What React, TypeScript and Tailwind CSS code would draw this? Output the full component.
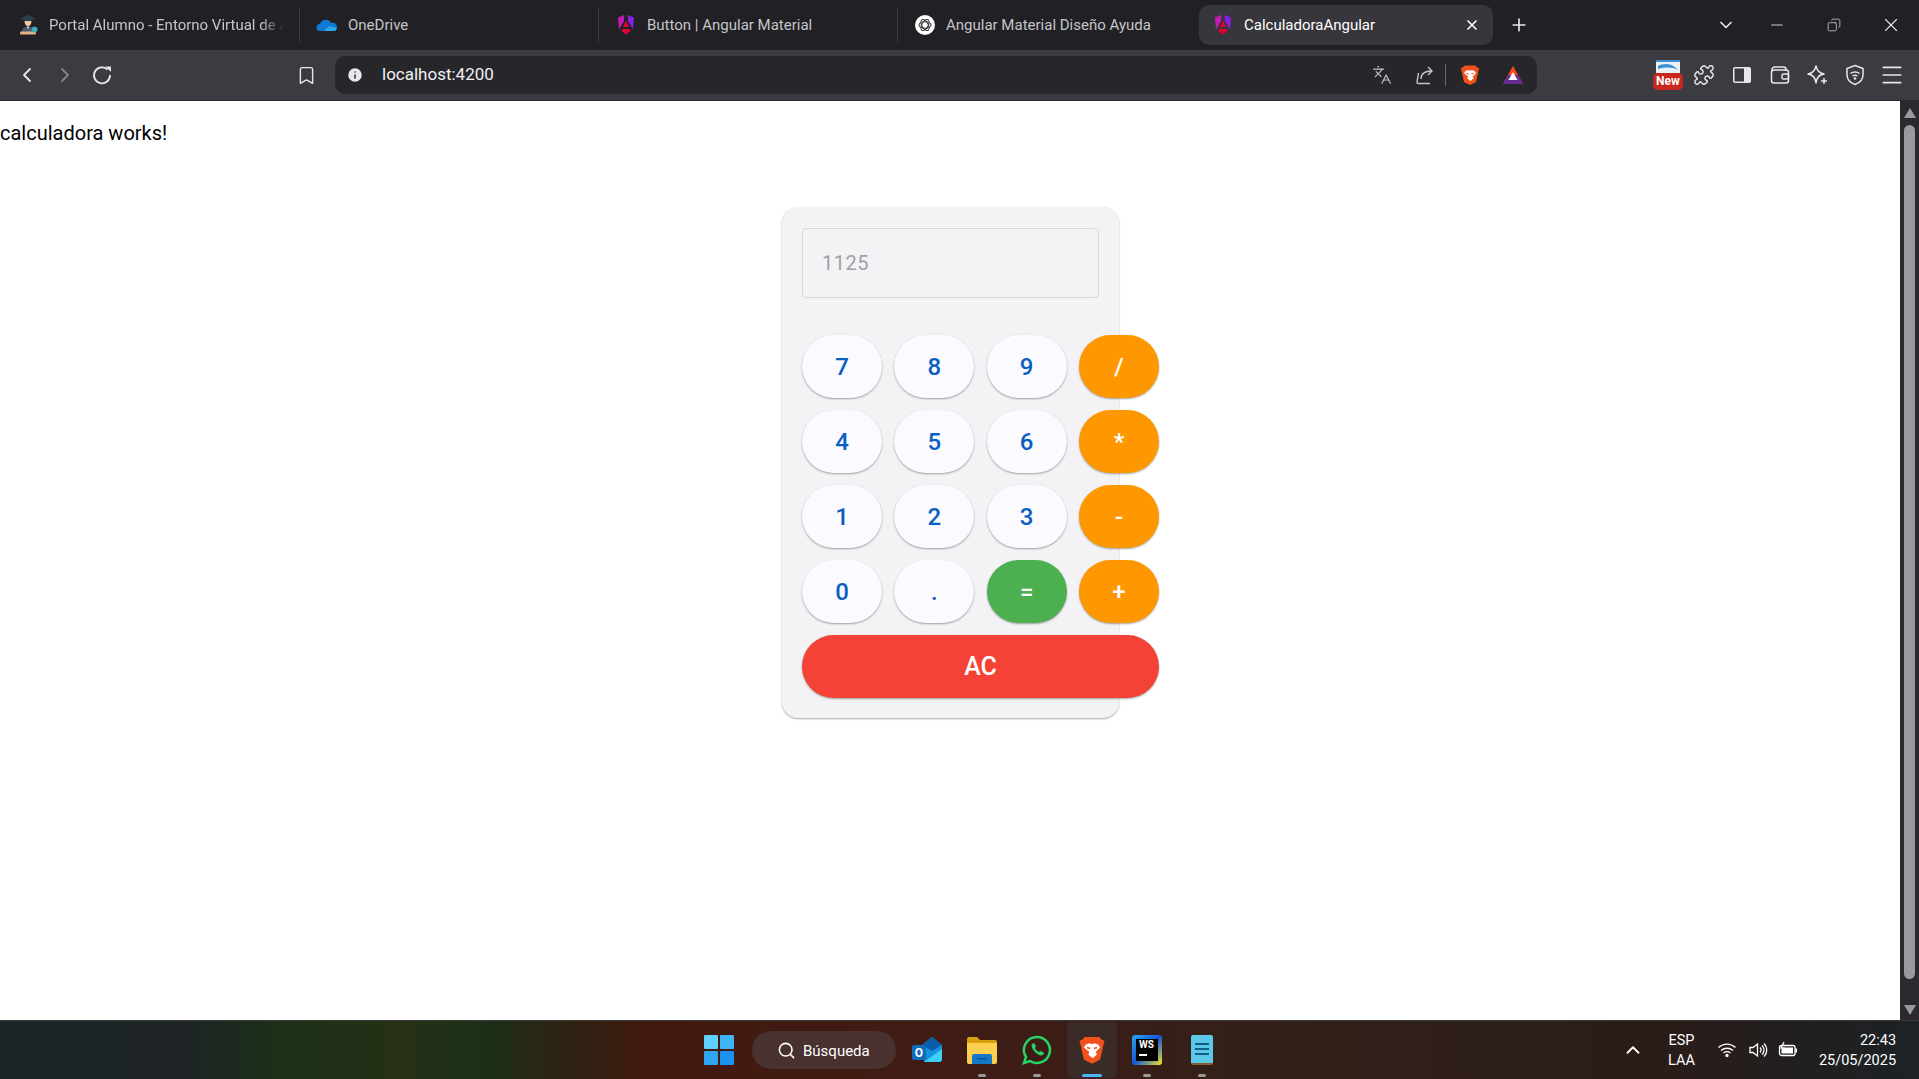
import type { ReactNode } from 'react';
import { ChevronLeft, ChevronRight, Bookmark, Info, Languages, Puzzle, Menu, X, Plus, ChevronDown, Minus, Copy, Search, ChevronUp } from 'lucide-react';

const AngularIcon = () => (
  <svg width="20" height="22" viewBox="0 0 20 22">
    <path d="M8.400 1 2 3.500l1 12L8 7z" fill="#c31cb5" />
    <path d="M11.600 1 18 3.500l-1 12L12 7z" fill="#8a1fe0" />
    <path d="M10 6.500 7 13h6z" fill="#e40035" />
    <path d="M6.500 15h7l1 2-4.500 3.500L5.500 17z" fill="#e40035" />
  </svg>
);

const BraveIcon = ({ size = 22 }: { size?: number }) => (
  <svg width={size} height={size} viewBox="0 0 24 24">
    <path d="M6 1.500h12l1.500 2 2.500 1-1 4-2.500 11L12 23l-6.500-3.500L3 8.500l-1-4 2.500-1z" fill="#f1511b" />
    <path d="M7 7.500l3-1 2 .8 2-.8 3 1 1.500 2.500-3.500 3.500 1 2-3.500 3-3.500-3 1-2L5.500 10z" fill="#fff" />
    <path d="M8 10l2.500.8M16 10l-2.500.8" stroke="#f1511b" strokeWidth="1.200" />
  </svg>
);

const StudentIcon = () => (
  <svg width="20" height="22" viewBox="0 0 20 22">
    <path d="M2 4.500 10 1l8 3.500L10 8z" fill="#2c3e50" />
    <path d="M6.500 7c0 3 1.500 5 3.500 5s3.500-2 3.500-5z" fill="#f2c9a0" />
    <path d="M4 18c0-4 2.500-5.500 6-5.500s6 1.500 6 5.500z" fill="#4a5a6a" />
    <path d="M9 12.500h2l-1 3z" fill="#fff" />
    <rect x="2" y="17.500" width="16" height="3" rx="1" fill="#e0b080" />
    <circle cx="16.500" cy="15.500" r="3" fill="#3aa0d8" />
    <path d="M15 15.500l1.500-1.500 1.500 2-2 1.500z" fill="#6cc04a" />
  </svg>
);

const OneDriveIcon = () => (
  <svg width="22" height="16" viewBox="0 0 22 16">
    <path d="M4 14a3.500 3.500 0 0 1 0-7 6 6 0 0 1 11-1 4.500 4.500 0 0 1 4 8z" fill="#0f78d4" />
    <path d="M8 14l5-5 7 1.500a3 3 0 0 1-1 3.500z" fill="#29a8ea" />
  </svg>
);

const ChatIcon = () => (
  <svg width="20" height="20" viewBox="0 0 20 20">
    <circle cx="10" cy="10" r="10" fill="#fff" />
    <g fill="none" stroke="#333" strokeWidth="1.100">
      <ellipse cx="10" cy="10" rx="6" ry="3.200" />
      <ellipse cx="10" cy="10" rx="6" ry="3.200" transform="rotate(60 10 10)" />
      <ellipse cx="10" cy="10" rx="6" ry="3.200" transform="rotate(120 10 10)" />
    </g>
  </svg>
);

const tabs = [
  { title: 'Portal Alumno - Entorno Virtual de A', icon: <StudentIcon />, fade: true },
  { title: 'OneDrive', icon: <OneDriveIcon />, fade: false },
  { title: 'Button | Angular Material', icon: <AngularIcon />, fade: false },
  { title: 'Angular Material Diseño Ayuda', icon: <ChatIcon />, fade: false },
];

const keys = [
  { label: '7', kind: 'num' }, { label: '8', kind: 'num' }, { label: '9', kind: 'num' }, { label: '/', kind: 'op' },
  { label: '4', kind: 'num' }, { label: '5', kind: 'num' }, { label: '6', kind: 'num' }, { label: '*', kind: 'op' },
  { label: '1', kind: 'num' }, { label: '2', kind: 'num' }, { label: '3', kind: 'num' }, { label: '-', kind: 'op' },
  { label: '0', kind: 'num' }, { label: '.', kind: 'num' }, { label: '=', kind: 'eq' }, { label: '+', kind: 'op' },
];

const keyStyle: Record<string, string> = {
  num: 'bg-[#fafaff] text-[#0a5fbf]',
  op: 'bg-[#ff9800] text-white',
  eq: 'bg-[#4caf50] text-white',
};

// Taskbar slot with its running-app pill
function TaskSlot({ children, pill, active }: { children: ReactNode; pill?: boolean; active?: boolean }) {
  return (
    <div className={`relative mr-[5px] flex h-[56px] w-[50px] items-center justify-center rounded-[5px] ${active ? 'bg-[#3a2a28]' : ''}`}>
      {children}
      {pill && <span className={`absolute bottom-[1px] h-[3px] rounded-full ${active ? 'w-[20px] bg-[#47b8f5]' : 'w-[8px] bg-[#9a9a9a]'}`} />}
    </div>
  );
}

export default function App() {
  return (
    <div className="flex h-screen flex-col overflow-hidden bg-white font-['Roboto',sans-serif]">
      {/* Tab strip */}
      <div className="flex h-[50px] shrink-0 items-center bg-[#202025] pl-[4px]">
        {tabs.map((tab, i) => (
          <div key={tab.title} className={`mr-[3px] flex h-[36px] w-[296px] items-center overflow-hidden pl-[13px] text-[15px] text-[#c5c5c9] ${i < 3 ? 'border-r border-[#3a3a40]' : ''}`}>
            <span className="flex w-[22px] shrink-0 justify-center">{tab.icon}</span>
            <span className={`ml-[10px] overflow-hidden whitespace-nowrap ${tab.fade ? 'w-[235px] [mask-image:linear-gradient(90deg,#000_90%,transparent)]' : ''}`}>{tab.title}</span>
          </div>
        ))}
        <div className="-ml-px flex h-[40px] w-[294px] items-center rounded-[10px] bg-[#36363c] pl-[13px] pr-[13px] text-[15px] text-white">
          <span className="flex w-[22px] shrink-0 justify-center"><AngularIcon /></span>
          <span className="ml-[10px] flex-1 whitespace-nowrap">CalculadoraAngular</span>
          <X size={16} strokeWidth={2.5} />
        </div>
        <Plus size={20} className="ml-[16px] text-[#e6e6e8]" />
        <ChevronDown size={20} className="ml-[187px] text-[#e6e6e8]" />
        <Minus size={18} strokeWidth={1.2} className="ml-[32px] text-[#e6e6e8]" />
        <Copy size={14} strokeWidth={1.2} className="ml-[41px] -scale-x-100 text-[#e6e6e8]" />
        <X size={22} strokeWidth={1.2} className="ml-[39px] text-[#e6e6e8]" />
      </div>

      {/* Toolbar */}
      <div className="flex h-[51px] shrink-0 items-center border-b border-[#2a2a2e] bg-[#3b3b41] pl-[15px] text-[#e8e8ea]">
        <ChevronLeft size={24} strokeWidth={1.8} />
        <ChevronRight size={24} strokeWidth={1.8} className="ml-[14px] text-[#85858a]" />
        <svg width="22" height="22" viewBox="0 0 22 22" fill="none" className="ml-[14px]">
          <path d="M16.500 5.500A8 8 0 1 0 19 11" stroke="#e8e8ea" strokeWidth="1.800" />
          <path d="M14.500 2.500h5.500v5.500z" fill="#e8e8ea" />
        </svg>
        <Bookmark size={21} strokeWidth={1.6} className="ml-[183px]" />
        <div className="ml-[18px] flex h-[38px] w-[1202px] items-center rounded-[10px] bg-[#27272b] pl-[11px] pr-[13px]">
          <Info size={18} fill="#e8e8ea" stroke="#27272b" />
          <span className="ml-[18px] text-[17px] text-[#f0f0f2]">localhost:4200</span>
          <Languages size={20} strokeWidth={1.4} className="ml-auto text-[#c5c5c9]" />
          <svg width="20" height="20" viewBox="0 0 20 20" fill="none" stroke="#c5c5c9" strokeWidth="1.400" className="ml-[22px]">
            <path d="M4.500 8 3 17c0 1 .5 1.500 1.500 1.500H16" />
            <path d="M7 14c0-6 4-8 11-8M14 2l4 4-4 4" />
          </svg>
          <span className="ml-[11px] h-[22px] w-px bg-[#6a6a70]" />
          <span className="ml-[13px] flex"><BraveIcon /></span>
          <svg width="22" height="20" viewBox="0 0 22 20" className="ml-[21px]">
            <path d="M11 1 21 19H1z" fill="#ff4724" />
            <path d="M1 19 6 10h10l5 9z" fill="#662d91" />
            <path d="M11 7l4.500 8h-9z" fill="#fff" />
          </svg>
        </div>
        <div className="relative ml-[116px] h-[30px] w-[30px]">
          <svg width="24" height="13" viewBox="0 0 24 13" className="mx-auto">
            <rect width="24" height="13" fill="#e8f0f8" />
            <path d="M0 0h24v2H0z" fill="#3f8fd0" />
            <path d="M2 6c6-3 14-3 20 4-6-3-12-3-20-1z" fill="#3f8fd0" />
          </svg>
          <span className="absolute bottom-0 left-0 w-[30px] rounded-[5px] bg-[#c8281e] text-center text-[12px] font-bold leading-[17px] text-white">New</span>
        </div>
        <Puzzle size={22} strokeWidth={1.6} className="ml-[10px]" />
        <svg width="22" height="22" viewBox="0 0 22 22" fill="none" className="ml-[16px]">
          <rect x="2" y="3" width="18" height="16" rx="2" fill="#e8e8ea" />
          <rect x="3.500" y="4.500" width="9.500" height="13" fill="#3b3b41" />
        </svg>
        <svg width="22" height="22" viewBox="0 0 22 22" fill="none" stroke="#e8e8ea" strokeWidth="1.500" className="ml-[16px]">
          <path d="M3 7V5.500A2.500 2.500 0 0 1 5.500 3h9A2.500 2.500 0 0 1 17 5.500V7" />
          <rect x="2.500" y="6" width="17" height="13" rx="2.500" />
          <rect x="13" y="10" width="6.500" height="5" rx="1.500" />
        </svg>
        <svg width="22" height="22" viewBox="0 0 22 22" fill="none" className="ml-[15px]">
          <path d="M10 2c1 5 3 7 8 8-5 1-7 3-8 9-1-6-3-8-8-9 5-1 7-3 8-8z" stroke="#e8e8ea" strokeWidth="1.500" strokeLinejoin="round" />
          <path d="M18 14v6M15 17h6" stroke="#e8e8ea" strokeWidth="1.500" />
        </svg>
        <svg width="22" height="22" viewBox="0 0 22 22" fill="none" stroke="#e8e8ea" strokeWidth="1.500" className="ml-[16px]">
          <path d="M11 1.500 19 4.500v6c0 5-3.500 8.500-8 10-4.500-1.500-8-5-8-10v-6z" />
          <path d="M6.500 9.500c2.500-2 6.500-2 9 0M8.500 12c1.500-1 3.500-1 5 0" />
          <circle cx="11" cy="14.500" r=".6" fill="#e8e8ea" />
        </svg>
        <Menu size={26} strokeWidth={1.6} className="ml-[13px]" />
      </div>

      {/* Page */}
      <div className="flex min-h-0 flex-1">
        <main className="min-w-0 flex-1 bg-white">
          <p className="mt-[20px] text-[20px] leading-[25px] text-black">calculadora works!</p>
          <div className="ml-[782px] mt-[61px] h-[511px] w-[337px] rounded-[16px] bg-[#f3f3f5] px-[20px] pt-[21px] shadow-[0_1px_2px_rgba(0,0,0,0.35)]">
            <div className="flex h-[70px] w-[297px] items-center rounded-[4px] border border-[#d5d5da] pl-[19px] text-[20px] tracking-[0.5px] text-[#a0a0a8]">1125</div>
            <div className="mt-[37px] grid w-[357px] grid-cols-4 gap-x-[12.3px] gap-y-[12px]">
              {keys.map((key) => (
                <button key={key.label} className={`h-[63px] rounded-[32px] text-[24px] font-medium shadow-[0_1px_2px_rgba(0,0,0,0.35)] ${keyStyle[key.kind]}`}>{key.label}</button>
              ))}
              <button className="col-span-4 h-[63px] rounded-[32px] bg-[#f44336] text-[25px] font-medium text-white shadow-[0_1px_2px_rgba(0,0,0,0.35)]">AC</button>
            </div>
          </div>
        </main>
        <div className="flex w-[19px] shrink-0 flex-col items-center bg-[#2a2a2e] pb-[5px] pt-[7px]">
          <span className="h-0 w-0 border-x-[6px] border-b-[10px] border-x-transparent border-b-[#9a9a9e]" />
          <div className="mb-[26px] mt-[7px] w-[11px] flex-1 rounded-full bg-[#9a9a9e]" />
          <span className="h-0 w-0 border-x-[6px] border-t-[10px] border-x-transparent border-t-[#9a9a9e]" />
        </div>
      </div>

      {/* Taskbar */}
      <div className="flex h-[59px] shrink-0 items-center border-t border-[#3a3a3a] bg-[linear-gradient(90deg,#1c2428_0%,#1e2426_10%,#1c3018_14%,#263016_21%,#1c3018_25%,#2c2414_29%,#42190f_34%,#3f1c14_50%,#33201a_65%,#2a1c18_86%,#1c2226_100%)] pl-[704px] text-white">
        <svg width="30" height="30" viewBox="0 0 30 30">
          <rect width="14" height="14" rx="1" fill="#5fd0fb" />
          <rect x="16" width="14" height="14" rx="1" fill="#3fb5f5" />
          <rect y="16" width="14" height="14" rx="1" fill="#2fa6f2" />
          <rect x="16" y="16" width="14" height="14" rx="1" fill="#1b92ee" />
        </svg>
        <div className="ml-[18px] mr-[6px] flex h-[38px] w-[144px] items-center rounded-full bg-[#48312e] pl-[25px] text-[15px]">
          <Search size={19} strokeWidth={2} />
          <span className="ml-[7px] pt-[2px]">Búsqueda</span>
        </div>
        <TaskSlot>
          <div className="relative h-[28px] w-[30px]">
            <svg width="30" height="28" viewBox="0 0 30 28">
              <path d="M10 9 20 1l10 8v14a3 3 0 0 1-3 3H12z" fill="#1490df" />
              <path d="M20 1l10 8-10 6-10-6z" fill="#0a5ea8" />
              <path d="M12 26l18-13v10a3 3 0 0 1-3 3z" fill="#3fd0f5" />
            </svg>
            <span className="absolute left-0 top-[9px] flex h-[15px] w-[14px] items-center justify-center rounded-[2px] bg-[#0f6cbd] text-[12px] font-bold leading-none">O</span>
          </div>
        </TaskSlot>
        <TaskSlot pill>
          <svg width="30" height="28" viewBox="0 0 30 28">
            <path d="M0 3a2 2 0 0 1 2-2h8l3 3h15a2 2 0 0 1 2 2v3H0z" fill="#d9a010" />
            <path d="M0 7h30v19a2 2 0 0 1-2 2H2a2 2 0 0 1-2-2z" fill="#fbd04e" />
            <path d="M5 20a2 2 0 0 1 2-2h16a2 2 0 0 1 2 2v8H5z" fill="#1679c8" />
            <rect x="10" y="22" width="10" height="1.500" fill="#0d4f8a" />
          </svg>
        </TaskSlot>
        <TaskSlot pill>
          <svg width="30" height="30" viewBox="0 0 30 30">
            <path d="M15 2a13 13 0 0 0-11 20L2 28l6-2A13 13 0 1 0 15 2z" fill="none" stroke="#25d366" strokeWidth="2.500" />
            <path d="M10 9c-1 2 0 5 3 8s6 4 8 3l1-2-3-2-2 1c-2-1-3-2-4-4l1-2-2-3z" fill="#25d366" />
          </svg>
        </TaskSlot>
        <TaskSlot pill active><BraveIcon size={30} /></TaskSlot>
        <TaskSlot pill>
          <div className="relative h-[30px] w-[30px] rounded-[3px] bg-[linear-gradient(135deg,#2aa7f0,#1456d8_50%,#f5e625)]">
            <div className="absolute left-[4px] top-[4px] flex h-[22px] w-[22px] flex-col bg-black pl-[3px] text-[10px] font-bold leading-[12px]">
              WS
              <span className="mt-[3px] h-[2px] w-[8px] bg-white" />
            </div>
          </div>
        </TaskSlot>
        <TaskSlot pill>
          <div className="flex h-[30px] w-[22px] flex-col justify-center gap-[3px] rounded-[2px] border-b-2 border-b-[#8a5a30] bg-[#5cc8e8] px-[4px]">
            <span className="h-[2px] bg-[#0f5f80]" />
            <span className="h-[2px] bg-[#0f5f80]" />
            <span className="h-[2px] bg-[#0f5f80]" />
          </div>
        </TaskSlot>
        <ChevronUp size={22} className="ml-[390px]" />
        <div className="ml-[24px] pt-[2px] text-center text-[14.500px] leading-[20px]">ESP<br />LAA</div>
        <svg width="20" height="20" viewBox="0 0 20 20" fill="none" stroke="#fff" strokeWidth="1.300" className="ml-[22px]">
          <path d="M1.500 7.500c5-4.500 12-4.500 17 0M4 10.500c3.500-3 8.500-3 12 0M6.500 13c2-1.500 5-1.500 7 0" />
          <circle cx="10" cy="15.500" r="1" fill="#fff" />
        </svg>
        <svg width="20" height="20" viewBox="0 0 20 20" fill="none" stroke="#fff" strokeWidth="1.300" className="ml-[11px]">
          <path d="M2 7.500h3L9.500 4v12L5 12.500H2z" />
          <path d="M12 7.500a3.500 3.500 0 0 1 0 5M14 5.500a6 6 0 0 1 0 9M16 3.500a9 9 0 0 1 0 13" />
        </svg>
        <svg width="20" height="20" viewBox="0 0 20 20" fill="none" className="ml-[10px]">
          <rect x="1.500" y="5.500" width="15.500" height="10" rx="2" stroke="#fff" strokeWidth="1.300" />
          <rect x="3.500" y="7.500" width="11.500" height="6" fill="#fff" />
          <rect x="17.500" y="8.500" width="1.500" height="4" fill="#fff" />
          <path d="M6 2 3 8h3L4.500 12" stroke="#fff" strokeWidth="1.200" />
        </svg>
        <div className="ml-[21px] pt-[1px] text-right text-[14.500px] leading-[20px]">22:43<br />25/05/2025</div>
      </div>
    </div>
  );
}
